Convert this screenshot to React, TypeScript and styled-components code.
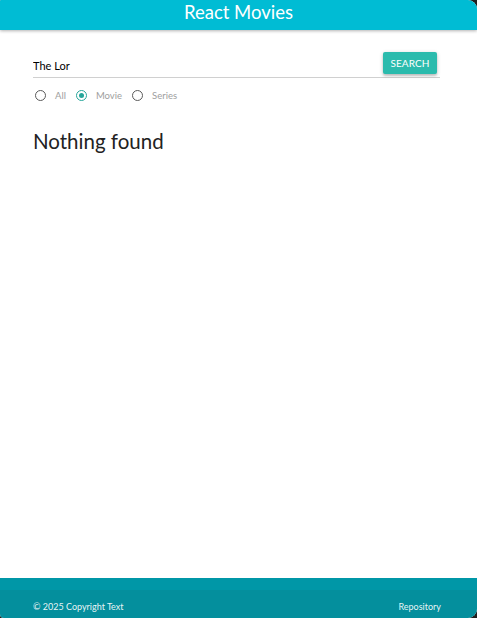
import React from "react";
import styled, { createGlobalStyle } from "styled-components";

const Global = createGlobalStyle`
  html, body { margin: 0; padding: 0; background: #1f1f1f; }
  body { font-family: Lato, "Open Sans", sans-serif; }
  * { box-sizing: border-box; }
`;

const Shell = styled.div`
  display: flex;
  flex-direction: column;
  min-height: 618px;
  background: #fff;
  border-radius: 1px 9px 9px 4px;
  overflow: hidden;
`;

const Header = styled.header`
  height: 30px;
  background: #00bcd4;
  display: flex;
  align-items: center;
  justify-content: center;
  box-shadow: 0 1px 3px rgba(0, 0, 0, 0.3);
  position: relative;
  z-index: 1;
`;

const Title = styled.h1`
  margin: 0;
  color: #fff;
  font-size: 18.5px;
  font-weight: 400;
  line-height: 1;
  padding-bottom: 6px;
`;

const Main = styled.main`
  flex: 1;
  padding: 22px 37px 0 33px;
  display: flex;
  flex-direction: column;
`;

const SearchRow = styled.div`
  position: relative;
  border-bottom: 1px solid #d0d0d0;
  height: 26px;
  display: flex;
  align-items: flex-end;
`;

const Input = styled.input`
  border: none;
  outline: none;
  font: inherit;
  font-size: 11px;
  color: #000;
  padding: 0 0 5px 0;
  width: 100%;
  background: transparent;
`;

const SearchButton = styled.button`
  position: absolute;
  right: 3px;
  top: 0;
  height: 22px;
  width: 54px;
  border: none;
  border-radius: 2px;
  background: #2bbbad;
  color: #fff;
  font: inherit;
  font-size: 10px;
  letter-spacing: 0.1px;
  box-shadow: 0 2px 2px rgba(0, 0, 0, 0.14), 0 1px 4px rgba(0, 0, 0, 0.2);
  padding: 0;
`;

const Radios = styled.div`
  display: flex;
  align-items: center;
  margin-top: 12px;
  padding-left: 2px;
`;

const RadioLabel = styled.label`
  display: flex;
  align-items: center;
  gap: 9px;
  margin-right: 10px;
  font-size: 9.5px;
  color: #9e9e9e;
`;

const Circle = styled.span<{ $checked?: boolean }>`
  width: 11px;
  height: 11px;
  border-radius: 50%;
  border: 1.5px solid ${(p) => (p.$checked ? "#26a69a" : "#5a5a5a")};
  display: flex;
  align-items: center;
  justify-content: center;
  &::after {
    content: "";
    width: 5px;
    height: 5px;
    border-radius: 50%;
    background: ${(p) => (p.$checked ? "#26a69a" : "transparent")};
  }
`;

const Empty = styled.h3`
  margin: 28px 0 0 0;
  font-size: 20.5px;
  font-weight: 400;
  color: #222;
`;

const Footer = styled.footer`
  background: #0097a7;
  padding-top: 12px;
`;

const Copyright = styled.div`
  background: rgba(51, 51, 51, 0.08);
  height: 28px;
  display: flex;
  align-items: center;
  justify-content: space-between;
  padding: 4px 36px 0 33px;
  color: rgba(255, 255, 255, 0.92);
  font-size: 9px;
`;

const Options = [
  { label: "All", checked: false },
  { label: "Movie", checked: true },
  { label: "Series", checked: false },
];

export default function App() {
  return (
    <>
      <Global />
      <Shell>
        <Header>
          <Title>React Movies</Title>
        </Header>
        <Main>
          <SearchRow>
            <Input defaultValue="The Lor" />
            <SearchButton>SEARCH</SearchButton>
          </SearchRow>
          <Radios>
            {Options.map((o) => (
              <RadioLabel key={o.label}>
                <Circle $checked={o.checked} />
                {o.label}
              </RadioLabel>
            ))}
          </Radios>
          <Empty>Nothing found</Empty>
        </Main>
        <Footer>
          <Copyright>
            <span>© 2025 Copyright Text</span>
            <span>Repository</span>
          </Copyright>
        </Footer>
      </Shell>
    </>
  );
}
